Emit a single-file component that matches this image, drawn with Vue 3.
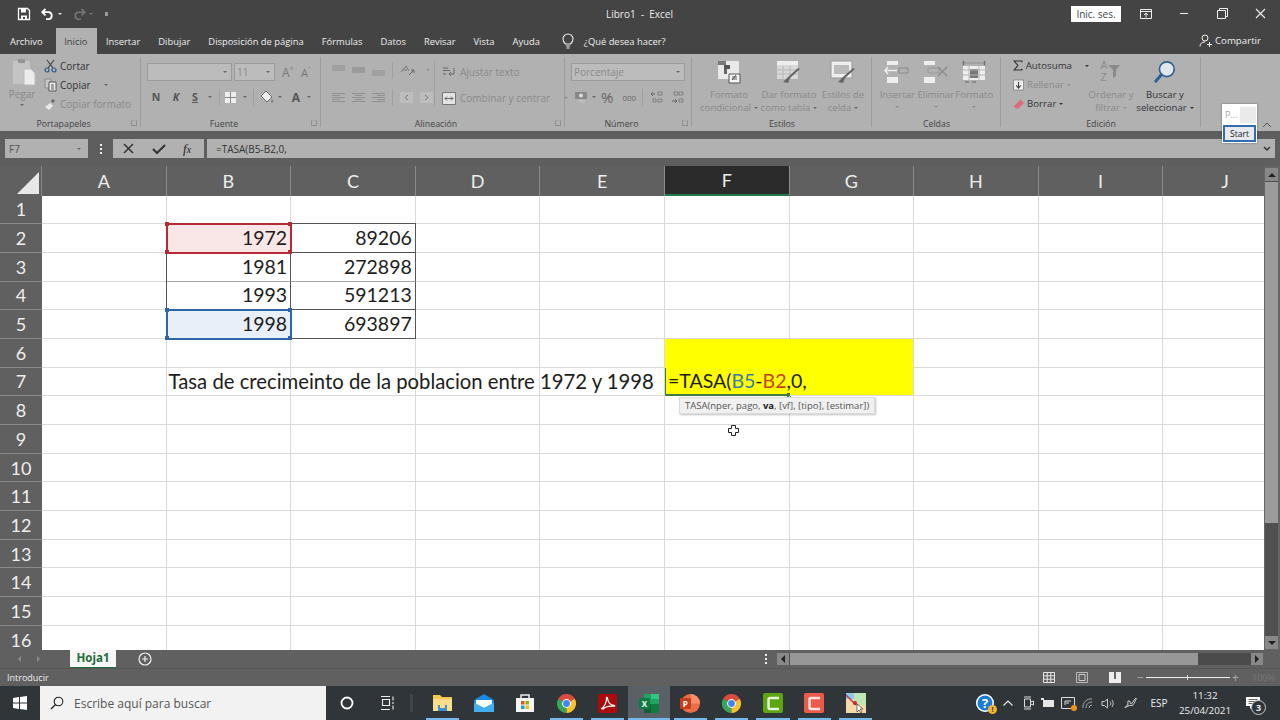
<script setup>
const columns = ['A', 'B', 'C', 'D', 'E', 'F', 'G', 'H', 'I', 'J']
const rows = Array.from({ length: 16 }, (_, i) => i + 1)

const values = {
  B2: '1972', C2: '89206',
  B3: '1981', C3: '272898',
  B4: '1993', C4: '591213',
  B5: '1998', C5: '693897',
}

const cellClass = (col, row) => {
  const id = col + row
  const list = []
  if (id === 'B2') list.push('refRed')
  if (id === 'B5') list.push('refBlue')
  if ((col === 'B' || col === 'C') && row >= 2 && row <= 5) list.push('boxed')
  if (col === 'B' && (row === 3 || row === 4)) list.push('boxLeft')
  if (id === 'C2') list.push('boxTop')
  if ((col === 'B' || col === 'C') && row === 3) list.push('softBottom')
  if (col === 'F' && row === 6) list.push('yellow', 'noRight', 'noBottom')
  if (col === 'G' && row === 6) list.push('yellow', 'noBottom')
  if (col === 'F' && row === 7) list.push('yellow', 'noRight', 'active')
  if (col === 'G' && row === 7) list.push('yellow')
  return list
}

const taskApps = ['folder', 'mail', 'store', 'chrome', 'pdf', 'excel', 'ppt', 'chrome2', 'green', 'red', 'paint']
</script>

<template>
  <div class="app">
    <div class="titleBar">
      <div class="quick">
        <svg width="14" height="14" viewBox="0 0 14 14"><path d="M1.500 1.500h9l2 2v9h-11z" fill="none" stroke="#fff" stroke-width="1.300"/><path d="M4 2h5v3.500H4zM4 8.500h6v4H4z" fill="#fff"/><path d="M6 10h2v2H6z" fill="#444"/></svg>
        <svg class="undo" width="14" height="12" viewBox="0 0 14 12"><path d="M4.500 1L1.200 4.200l3.300 3.200M1.500 4.200h6.500a3.600 3.600 0 0 1 0 7H5" fill="none" stroke="#fff" stroke-width="1.800"/></svg>
        <span class="tinyCaret"></span>
        <svg class="redo" width="14" height="12" viewBox="0 0 14 12"><path d="M9.500 1l3.300 3.200-3.300 3.200M12.500 4.200H6a3.600 3.600 0 0 0 0 7h3" fill="none" stroke="#777" stroke-width="1.600"/></svg>
        <span class="tinyCaret dim"></span>
        <span class="customize"></span>
      </div>
      <div class="docTitle">Libro1&nbsp; -&nbsp; Excel</div>
      <div class="winControls">
        <span class="signIn">Inic. ses.</span>
        <svg class="ctl" width="12" height="10" viewBox="0 0 12 10"><path d="M.5.500h11v9H.5zM.5 2.500h11" fill="none" stroke="#eee"/><path d="M6 8.500V4M4 6l2-2 2 2" fill="none" stroke="#eee"/></svg>
        <svg class="ctl" width="11" height="11" viewBox="0 0 11 11"><path d="M1 5.500h8" stroke="#eee"/></svg>
        <svg class="ctl" width="11" height="11" viewBox="0 0 11 11"><path d="M.5 2.500h8v8h-8zM2.500 2.500v-2h8v8h-2" fill="none" stroke="#eee"/></svg>
        <svg class="ctl" width="11" height="11" viewBox="0 0 11 11"><path d="M1 1l9 9M10 1l-9 9" stroke="#eee" stroke-width="1.100"/></svg>
      </div>
    </div>

    <div class="tabBar">
      <span class="tab">Archivo</span>
      <span class="tab current">Inicio</span>
      <span class="tab">Insertar</span>
      <span class="tab">Dibujar</span>
      <span class="tab">Disposición de página</span>
      <span class="tab">Fórmulas</span>
      <span class="tab">Datos</span>
      <span class="tab">Revisar</span>
      <span class="tab">Vista</span>
      <span class="tab">Ayuda</span>
      <svg class="bulb" width="12" height="16" viewBox="0 0 12 16"><path d="M3.500 11C2 9.500 1 8.300 1 6a5 5 0 0 1 10 0c0 2.300-1 3.500-2.500 5zM4 13h4M4.500 15h3" fill="none" stroke="#eee" stroke-width="1.100"/></svg>
      <span class="tab ask">¿Qué desea hacer?</span>
      <span class="share">
        <svg width="13" height="13" viewBox="0 0 13 13"><circle cx="6" cy="4" r="3" fill="none" stroke="#eee"/><path d="M1 12.500c0-3 2-4.500 5-4.500M8 10.500h5M10.500 8v5" fill="none" stroke="#eee"/></svg>
        Compartir
      </span>
    </div>

    <div class="ribbon">
      <div class="group clip">
        <div class="groupBody">
          <div class="pasteBtn">
            <svg width="24" height="28" viewBox="0 0 24 28"><path d="M1 3h17v23H1z" fill="#c4c4c4"/><path d="M6 1h7v4H6z" fill="#959595"/><path d="M12 11h7l4 4v12H12z" fill="#ececec" stroke="#bbb"/></svg>
            <span class="dimText">Pegar</span>
            <span class="tinyCaret darkish"></span>
          </div>
          <div class="clipList">
            <div class="clipItem">
              <svg width="13" height="14" viewBox="0 0 13 14"><path d="M3 1l6 8M10 1L4 9" stroke="#444" stroke-width="1.200"/><circle cx="3" cy="11" r="2" fill="none" stroke="#2f5d8e" stroke-width="1.200"/><circle cx="10" cy="11" r="2" fill="none" stroke="#2f5d8e" stroke-width="1.200"/></svg>
              <span class="darkText">Cortar</span>
            </div>
            <div class="clipItem">
              <svg width="13" height="14" viewBox="0 0 13 14"><path d="M1 1h6v9H1z" fill="#c9c9c9" stroke="#8a8a8a"/><path d="M5 4h7v9H5z" fill="#eee" stroke="#555"/><path d="M7 7h3M7 9h3M7 11h3" stroke="#555"/></svg>
              <span class="darkText">Copiar</span>
              <span class="tinyCaret darkish caretGap"></span>
            </div>
            <div class="clipItem">
              <svg width="13" height="14" viewBox="0 0 13 14"><path d="M1 10l5-4 3 3-4 4z" fill="#e8e8e8"/><path d="M7 4l2-2 2 2-2 2z" fill="#666"/></svg>
              <span class="dimText">Copiar formato</span>
            </div>
          </div>
        </div>
        <div class="groupLabel launch">Portapapeles<span class="launcher"></span></div>
      </div>

      <div class="group font">
        <div class="groupBody column">
          <div class="toolRow">
            <span class="combo fontName"><span class="tinyCaret darkish"></span></span>
            <span class="combo fontSize"><span class="dimText">11</span><span class="tinyCaret darkish"></span></span>
            <span class="sizeBtn">A<sup>^</sup></span>
            <span class="sizeBtn small">A<sup>ˇ</sup></span>
          </div>
          <div class="toolRow second tight">
            <b class="styleBtn">N</b>
            <b class="styleBtn italic m6">K</b>
            <b class="styleBtn under m5">S</b>
            <span class="tinyCaret darkish m6"></span>
            <span class="vline m7"></span>
            <svg class="m4" width="13" height="13" viewBox="0 0 13 13"><path d="M1 1h11v11H1z" fill="#eee"/><path d="M1 6.500h11M6.500 1v11" stroke="#888"/></svg>
            <span class="tinyCaret darkish m6"></span>
            <span class="vline m6"></span>
            <svg class="m6" width="14" height="14" viewBox="0 0 14 14"><path d="M6 1l6 6-5 5-6-6z" fill="#eee" stroke="#666"/><path d="M12 9c1 1.500 1.500 2 1 3s-2 .5-2 0 .5-1.500 1-3z" fill="#777"/></svg>
            <span class="tinyCaret darkish m4"></span>
            <b class="styleBtn colorA m7">A</b>
            <span class="tinyCaret darkish m4"></span>
          </div>
        </div>
        <div class="groupLabel launch">Fuente<span class="launcher"></span></div>
      </div>

      <div class="group align">
        <div class="groupBody">
          <div class="alignCol">
            <div class="toolRow">
              <svg width="13" height="11" viewBox="0 0 13 11"><path d="M0 1h13M0 3h13M0 5h13" stroke="#8f8f8f"/></svg>
              <svg width="13" height="11" viewBox="0 0 13 11"><path d="M0 3h13M0 5h13M0 7h13" stroke="#858585"/></svg>
              <svg width="13" height="11" viewBox="0 0 13 11"><path d="M0 6h13M0 8h13M0 10h13" stroke="#8f8f8f"/></svg>
              <span class="vline"></span>
              <svg width="16" height="14" viewBox="0 0 16 14"><path d="M1 9l5-6 3 5M3 7h4" fill="none" stroke="#777"/><path d="M9 12l5-5M14 7h-3M14 7v3" fill="none" stroke="#666"/></svg>
              <span class="tinyCaret dimCaret"></span>
            </div>
            <div class="toolRow second">
              <svg width="13" height="11" viewBox="0 0 13 11"><path d="M0 1.500h13M0 3.500h8M0 5.500h13M0 7.500h8M0 9.500h13" stroke="#909090"/></svg>
              <svg width="13" height="11" viewBox="0 0 13 11"><path d="M0 1.500h13M3 3.500h7M0 5.500h13M3 7.500h7M0 9.500h13" stroke="#909090"/></svg>
              <svg width="13" height="11" viewBox="0 0 13 11"><path d="M0 1.500h13M5 3.500h8M0 5.500h13M5 7.500h8M0 9.500h13" stroke="#909090"/></svg>
              <span class="vline"></span>
              <svg width="13" height="11" viewBox="0 0 13 11"><path d="M0 0h13v11H0z" fill="#bdbdbd"/><path d="M8 3L5 5.500 8 8" fill="none" stroke="#777"/></svg>
              <svg width="13" height="11" viewBox="0 0 13 11"><path d="M0 0h13v11H0z" fill="#bdbdbd"/><path d="M5 3l3 2.500L5 8" fill="none" stroke="#777"/></svg>
            </div>
          </div>
          <div class="alignCol wrapCol">
            <div class="clipItem">
              <svg width="14" height="14" viewBox="0 0 14 14"><path d="M1 3h5M1 5.500h7M1 9h3M12 3v6H7M9 7l-2 2 2 2" fill="none" stroke="#666"/></svg>
              <span class="dimText">Ajustar texto</span>
            </div>
            <div class="clipItem">
              <svg width="14" height="13" viewBox="0 0 14 13"><path d="M.5.500h13v12H.5z" fill="#e4e4e4" stroke="#777"/><path d="M3 6.500h8M3 6.500l2-2M3 6.500l2 2M11 6.500l-2-2M11 6.500l-2 2" stroke="#666" fill="none"/></svg>
              <span class="dimText">Combinar y centrar</span>
              <span class="tinyCaret dimCaret caretGap"></span>
            </div>
          </div>
        </div>
        <div class="groupLabel launch">Alineación<span class="launcher"></span></div>
      </div>

      <div class="group number">
        <div class="groupBody column">
          <div class="toolRow">
            <span class="combo numFormat"><span class="dimText">Porcentaje</span><span class="tinyCaret darkish"></span></span>
          </div>
          <div class="toolRow second tight">
            <svg width="14" height="14" viewBox="0 0 14 14"><path d="M1 2h12v7H1z" fill="#888"/><circle cx="7" cy="5.500" r="2" fill="#ddd"/><path d="M5 10h6v3H5z" fill="#bcbcbc"/></svg>
            <span class="tinyCaret darkish m4"></span>
            <span class="percent m5">%</span>
            <span class="thousand m9">000</span>
            <span class="vline m6"></span>
            <svg class="m7" width="14" height="14" viewBox="0 0 14 14"><path d="M1 4h4M1 4l2-2M1 4l2 2" stroke="#666" fill="none"/><path d="M8 2h4v3H8zM3 9h3v3H3zM8 9h4v3H8z" fill="none" stroke="#777" stroke-width=".8"/></svg>
            <svg class="m7" width="14" height="14" viewBox="0 0 14 14"><path d="M3 2h4v3H3zM8 2h4v3H8zM8 9h4v3H8z" fill="none" stroke="#777" stroke-width=".8"/><path d="M1 11h5M6 11l-2-2M6 11l-2 2" stroke="#666" fill="none"/></svg>
          </div>
        </div>
        <div class="groupLabel launch">Número<span class="launcher"></span></div>
      </div>

      <div class="group styles">
        <div class="groupBody bigRow">
          <div class="bigBtn wideA">
            <svg width="24" height="24" viewBox="0 0 24 24"><path d="M1 1h21v18H1z" fill="#e9e9e9"/><path d="M1 1h8v4H1z" fill="#777"/><path d="M7 5h6v4H7z" fill="#555"/><path d="M7 9h3v5H7z" fill="#666"/><path d="M12 14h11v9H12z" fill="#f4f4f4" stroke="#555"/><path d="M15 20l4-5M15 17h5M15 19h5" stroke="#333" stroke-width=".8"/></svg>
            <span class="dimText">Formato</span>
            <span class="dimText">condicional<i class="tinyCaret darkish"></i></span>
          </div>
          <div class="bigBtn wideB">
            <svg width="26" height="24" viewBox="0 0 26 24"><path d="M1 1h21v18H1z" fill="#d8d8d8"/><path d="M1 1h21v4H1z" fill="#eee"/><path d="M7 6v13M14 6v13M1 10h21M1 14h21" stroke="#b8b8b8"/><path d="M24 9L14 18l-2 5-5-1 5-5 10-9z" fill="#666"/></svg>
            <span class="dimText">Dar formato</span>
            <span class="dimText">como tabla<i class="tinyCaret darkish"></i></span>
          </div>
          <div class="bigBtn wideC">
            <svg width="26" height="24" viewBox="0 0 26 24"><path d="M1 1h21v17H1z" fill="#eee" stroke="#999"/><path d="M4 5h15v9H4z" fill="#bbb"/><path d="M25 9L15 18l-2 5-5-1 5-5 10-9z" fill="#666"/></svg>
            <span class="dimText">Estilos de</span>
            <span class="dimText">celda<i class="tinyCaret darkish"></i></span>
          </div>
        </div>
        <div class="groupLabel">Estilos</div>
      </div>

      <div class="group cells">
        <div class="groupBody bigRow">
          <div class="bigBtn cellBtn">
            <svg width="26" height="24" viewBox="0 0 26 24"><path d="M3 1h11v4H3zM3 17h11v6H3z" fill="#eee"/><path d="M15 8h9v5h-9z" fill="none" stroke="#888"/><path d="M13 10.500H1M4 7l-3 3.500L4 14" fill="none" stroke="#eee" stroke-width="1.500"/></svg>
            <span class="dimText">Insertar</span>
            <i class="tinyCaret dimCaret"></i>
          </div>
          <div class="bigBtn cellBtn">
            <svg width="26" height="24" viewBox="0 0 26 24"><path d="M1 1h11v4H1zM1 17h11v6H1z" fill="#eee"/><path d="M5 8h11v5H5z" fill="none" stroke="#999"/><path d="M15 7l9 9M24 7l-9 9" stroke="#888" stroke-width="1.200"/></svg>
            <span class="dimText">Eliminar</span>
            <i class="tinyCaret dimCaret"></i>
          </div>
          <div class="bigBtn cellBtn">
            <svg width="24" height="24" viewBox="0 0 24 24"><path d="M1 1h1v4H1zM22 1h1v4h-1zM2 3h20" fill="#666" stroke="#777" stroke-width=".5"/><path d="M1 6h22v14H1z" fill="#eee"/><path d="M8 9h8v9H8z" fill="#777"/><path d="M1 10h22M1 15h22M7 6v14M17 6v14" stroke="#b5b5b5"/><path d="M3 22h4M10 22h4" stroke="#666"/></svg>
            <span class="dimText">Formato</span>
            <i class="tinyCaret dimCaret"></i>
          </div>
        </div>
        <div class="groupLabel">Celdas</div>
      </div>

      <div class="group edit">
        <div class="groupBody">
          <div class="clipList editList">
            <div class="clipItem">
              <svg width="11" height="13" viewBox="0 0 12 13"><path d="M11 2.500V1H1.500L6 6.500 1.500 12H11v-1.500" fill="none" stroke="#333" stroke-width="1.400"/></svg>
              <span class="darkText">Autosuma</span>
              <span class="tinyCaret black caretGap"></span>
            </div>
            <div class="clipItem">
              <svg width="11" height="12" viewBox="0 0 12 12"><path d="M.5.500h11v11H.5z" fill="#eee" stroke="#888"/><path d="M6 2.500v7M3.500 6.500L6 9.500l2.500-3" fill="none" stroke="#444" stroke-width="1.200"/></svg>
              <span class="dimText">Rellenar<i class="tinyCaret dimCaret"></i></span>
            </div>
            <div class="clipItem">
              <svg width="11" height="12" viewBox="0 0 12 12"><path d="M8 1l4 4-6 6H3L1 8.500z" fill="#dc6c7a"/></svg>
              <span class="darkText">Borrar<i class="tinyCaret black"></i></span>
            </div>
          </div>
          <div class="bigBtn sortBtn">
            <div class="sortIcon">
              <div class="azStack"><span>A</span><span>Z</span></div>
              <svg width="13" height="15" viewBox="0 0 13 15"><path d="M0 1h12L8 6v6l-3 2V6z" fill="#8a8a8a"/></svg>
            </div>
            <span class="dimText">Ordenar y</span>
            <span class="dimText">filtrar<i class="tinyCaret dimCaret"></i></span>
          </div>
          <div class="bigBtn findBtn">
            <svg width="24" height="24" viewBox="0 0 24 26"><circle cx="14" cy="10" r="8" fill="#dfe6ec" stroke="#2b5f96" stroke-width="1.800"/><path d="M8 16L2 23" stroke="#2b5f96" stroke-width="3.200" stroke-linecap="round"/></svg>
            <span class="darkText">Buscar y</span>
            <span class="darkText">seleccionar<i class="tinyCaret black"></i></span>
          </div>
        </div>
        <div class="groupLabel">Edición</div>
      </div>

      <svg class="collapse" width="10" height="6" viewBox="0 0 10 6"><path d="M1 5l4-4 4 4" fill="none" stroke="#555"/></svg>

      <div class="startPopup">
        <div class="popupTop"><span>P...</span><i></i></div>
        <div class="popupBtn">Start</div>
      </div>
    </div>

    <div class="formulaBar">
      <div class="nameBox">F7<span class="tinyCaret darkish"></span></div>
      <div class="dots"><i></i><i></i><i></i></div>
      <div class="fxBox">
        <svg width="13" height="13" viewBox="0 0 13 13"><path d="M2 2l9 9M11 2l-9 9" stroke="#333" stroke-width="1.500"/></svg>
        <svg width="14" height="12" viewBox="0 0 14 12"><path d="M1 6l4 4 8-8" fill="none" stroke="#333" stroke-width="2"/></svg>
        <span class="fx">f<small>x</small></span>
      </div>
      <div class="formulaInput">
        <span>=TASA(B5-B2,0,</span>
        <svg width="8" height="5" viewBox="0 0 8 5"><path d="M1 1l3 3 3-3" fill="none" stroke="#333" stroke-width="1.500"/></svg>
      </div>
    </div>

    <div class="sheetArea">
      <div class="sheet">
        <div class="corner"><span></span></div>
        <div v-for="col in columns" :key="col" class="colHead" :class="{ selected: col === 'F' }">{{ col }}</div>
        <template v-for="row in rows" :key="row">
          <div class="rowHead">{{ row }}</div>
          <div v-for="col in columns" :key="col" class="cell" :class="cellClass(col, row)">
            <template v-if="values[col + row]">{{ values[col + row] }}</template>
            <span v-if="col === 'B' && row === 7" class="longText">Tasa de crecimeinto de la poblacion entre 1972 y 1998</span>
            <span v-if="col === 'F' && row === 7" class="editor">=TASA(<b class="blue">B5</b>-<b class="red">B2</b>,0,</span>
            <template v-if="(col + row) === 'B2' || (col + row) === 'B5'">
              <i class="handle tl"></i><i class="handle tr"></i><i class="handle bl"></i><i class="handle br"></i>
            </template>
          </div>
        </template>
        <div class="tooltip">TASA(nper, pago, <b>va</b>, [vf], [tipo], [estimar])</div>
        <svg class="cursor" width="11" height="11" viewBox="0 0 11 11"><path d="M3.500.500h4v3h3v4h-3v3h-4v-3h-3v-4h3z" fill="#fff" stroke="#222"/></svg>
      </div>
      <div class="vScroll">
        <div class="vTrack">
          <span class="arrowBox"><i class="triUp"></i></span>
          <div class="vThumb"></div>
          <span class="arrowBox bottom"><i class="triDown"></i></span>
        </div>
      </div>
    </div>

    <div class="sheetTabs">
      <span class="navArrow left"></span>
      <span class="navArrow right"></span>
      <span class="sheetTab">Hoja1</span>
      <svg class="addSheet" width="14" height="14" viewBox="0 0 14 14"><circle cx="7" cy="7" r="6" fill="none" stroke="#f2f2f2" stroke-width="1.200"/><path d="M7 4v6M4 7h6" stroke="#f2f2f2" stroke-width="1.200"/></svg>
      <div class="dots tabDots"><i></i><i></i><i></i></div>
      <div class="hScroll">
        <span class="hArrow"><i class="triLeft"></i></span>
        <div class="hThumb"></div>
        <span class="hArrow end"><i class="triRight"></i></span>
      </div>
    </div>

    <div class="statusBar">
      <span>Introducir</span>
      <div class="viewIcons">
        <svg width="12" height="11" viewBox="0 0 12 11"><path d="M.5.500h11v10H.5zM.5 3.800h11M.5 7.200h11M4.200.500v10M7.800.500v10" fill="none" stroke="#e6e6e6"/></svg>
        <svg width="12" height="11" viewBox="0 0 12 11"><path d="M.5.500h11v10H.5z" fill="none" stroke="#bbb"/><path d="M3 2.500h6v6H3z" fill="none" stroke="#ccc"/></svg>
        <svg width="12" height="11" viewBox="0 0 12 11"><path d="M0 0h12v11H0z" fill="#eee"/><path d="M5 0h2v7H5z" fill="#666"/></svg>
      </div>
      <div class="zoomSlider"><span class="zoomSign">−</span><div class="sliderLine"><i></i></div><span class="zoomSign">+</span><span class="zoomPct">100%</span></div>
    </div>

    <div class="taskbar">
      <div class="startBtn">
        <svg width="14" height="14" viewBox="0 0 14 14"><path d="M0 2l6-1v5.500H0zM7 .9L14 0v6.500H7zM0 7.500h6V13l-6-1zM7 7.500h7V14l-7-1z" fill="#fff"/></svg>
      </div>
      <div class="searchBox">
        <svg width="14" height="14" viewBox="0 0 14 14"><circle cx="8.500" cy="5.500" r="4.300" fill="none" stroke="#222" stroke-width="1.100"/><path d="M5.500 8.500L1 13" stroke="#222" stroke-width="1.200"/></svg>
        <span>Escribe aquí para buscar</span>
      </div>
      <div class="sysBtn"><svg width="14" height="14" viewBox="0 0 14 14"><circle cx="7" cy="7" r="5.500" fill="none" stroke="#fff" stroke-width="1.800"/></svg></div>
      <div class="sysBtn"><svg width="15" height="14" viewBox="0 0 15 14"><path d="M1 .5h9M1 13.500h9M2.500 3.500h7v6h-7zM13 .5v4M13 6v2M13 9.500v4" fill="none" stroke="#eee" stroke-width="1.100"/></svg></div>
      <span class="taskSep"></span>
      <div v-for="app in taskApps" :key="app" class="taskApp" :class="{ current: app === 'excel', noBar: app === 'store' || app === 'mail' }">
        <svg v-if="app === 'folder'" width="20" height="18" viewBox="0 0 20 18"><path d="M0 1h7l2 2h10v14H0z" fill="#f5c94e"/><path d="M0 5h19v12H0z" fill="#fbdd8b"/><path d="M5 11h9v6H5z" fill="#3f8fce"/><path d="M7 11h5v3H7z" fill="#fbdd8b"/></svg>
        <svg v-if="app === 'mail'" width="20" height="18" viewBox="0 0 20 18"><path d="M0 6l10-6 10 6v12H0z" fill="#1a8ae0"/><path d="M2 6h16v4l-8 4-8-4z" fill="#fff"/><path d="M0 9l10 5 10-5v9H0z" fill="#42b0f0"/></svg>
        <svg v-if="app === 'store'" width="20" height="20" viewBox="0 0 20 20"><path d="M1 5h18v14H1z" fill="#f5f5f5"/><path d="M6 5V2h8v3" fill="none" stroke="#eee" stroke-width="1.500"/><path d="M6 8h3.500v3.500H6z" fill="#e8502a"/><path d="M10.500 8H14v3.500h-3.500z" fill="#7fba00"/><path d="M6 12.500h3.500V16H6z" fill="#1ba1e2"/><path d="M10.500 12.500H14V16h-3.500z" fill="#fbb900"/></svg>
        <svg v-if="app === 'chrome' || app === 'chrome2'" width="19" height="19" viewBox="0 0 19 19"><path d="M9.500 9.500L1.270 4.750A9.500 9.500 0 0 1 17.730 4.750z" fill="#dd4b3e"/><path d="M9.500 9.500V19A9.500 9.500 0 0 1 1.270 4.750z" fill="#3aa757"/><path d="M9.500 9.500l8.230-4.750A9.500 9.500 0 0 1 9.500 19z" fill="#fbc02d"/><circle cx="9.500" cy="9.500" r="4.400" fill="#fff"/><circle cx="9.500" cy="9.500" r="3.400" fill="#4285f4"/></svg>
        <svg v-if="app === 'pdf'" width="19" height="19" viewBox="0 0 19 19"><rect width="19" height="19" rx="2" fill="#ad0b0b"/><path d="M3 15c3-1.500 6-7 5.500-11-.2-1 .9-1 1 0 .4 4 3 7 6.500 7.300 1 .1.800 1 0 .9-4-.4-9 .5-11.500 3.300" fill="none" stroke="#fff" stroke-width="1.200"/></svg>
        <svg v-if="app === 'excel'" width="20" height="19" viewBox="0 0 20 19"><path d="M5 0h15v19H5z" fill="#21a366"/><path d="M12 0h8v5h-8z" fill="#33c481"/><path d="M12 5h8v5h-8z" fill="#21a366"/><path d="M5 10h7v9H5z" fill="#185c37"/><path d="M12 10h8v9h-8z" fill="#107c41"/><rect y="4" width="11" height="11" rx="1" fill="#107c41"/><text x="2.800" y="12.500" class="appLetter">X</text></svg>
        <svg v-if="app === 'ppt'" width="20" height="19" viewBox="0 0 20 19"><circle cx="10.500" cy="9.500" r="9.500" fill="#ed6c47"/><path d="M10.500 0A9.500 9.500 0 0 1 20 9.500h-9.500z" fill="#ff8f6b"/><rect y="4" width="11" height="11" rx="1" fill="#c43e1c"/><text x="2.800" y="12.500" class="appLetter">P</text></svg>
        <svg v-if="app === 'green'" width="20" height="20" viewBox="0 0 20 20"><rect width="20" height="20" rx="2" fill="#5ba612"/><path d="M16 5H7C6 5 5.500 6 5.500 7v7c0 1 .5 2 1.500 2h9" fill="none" stroke="#e6f4d7" stroke-width="2.500"/></svg>
        <svg v-if="app === 'red'" width="20" height="20" viewBox="0 0 20 20"><rect width="20" height="20" rx="2" fill="#ec5a49"/><path d="M16 5H7C6 5 5.500 6 5.500 7v7c0 1 .5 2 1.500 2h9" fill="none" stroke="#fde4df" stroke-width="2.500"/></svg>
        <svg v-if="app === 'paint'" width="20" height="20" viewBox="0 0 20 20"><path d="M0 0h20v20H0z" fill="#f7d8a8"/><path d="M8 0h12v12H8z" fill="#bfe6b5"/><path d="M0 0h8v6H0z" fill="#8fc7ea"/><path d="M0 2l10 10" stroke="#c2344a" stroke-width="1.500"/><circle cx="9" cy="10" r="2" fill="#d21f2d"/><path d="M11 11l0 8 2-2 2 3 1-1-2-3 3 0z" fill="#fff" stroke="#222" stroke-width=".6"/></svg>
      </div>
      <div class="tray">
        <span class="slot s24"><span class="helpIcon">?<i>!</i></span></span>
        <span class="slot s21"><svg width="10" height="6" viewBox="0 0 10 6"><path d="M.5 5.500L5 1l4.500 4.500" fill="none" stroke="#eee" stroke-width="1.100"/></svg></span>
        <span class="slot s20"><svg width="11" height="14" viewBox="0 0 11 14"><path d="M1.500 3h6v8h-6zM7.500 6l3-1v4l-3-1zM1 1h7M1 13h7" fill="none" stroke="#ddd"/></svg></span>
        <span class="slot s20"><svg width="14" height="10" viewBox="0 0 14 10"><path d="M2 2h11v7H2z" fill="#e6e6e6"/><path d="M0 0h3v2H0z" fill="#e6e6e6"/></svg></span>
        <span class="slot s20"><span class="hub"><svg width="14" height="12" viewBox="0 0 14 12"><path d="M.5.500h13v11H.5zM4 8V4h6M5 6h3" fill="none" stroke="#ddd"/></svg><i></i></span></span>
        <span class="slot s20"><svg width="12" height="10" viewBox="0 0 12 10"><path d="M1 10a8 8 0 0 1 9-9M4 10a5.500 5.500 0 0 1 6-6M7 10a3 3 0 0 1 3-3" fill="none" stroke="#aaa"/></svg></span>
        <span class="slot s20"><svg width="14" height="11" viewBox="0 0 14 11"><path d="M1 3.500h2.500L6.500 1v9L3.500 7.500H1zM9 3.500c1 1 1 3 0 4M11 2c1.500 2 1.500 5 0 7" fill="none" stroke="#ccc"/></svg></span>
        <span class="slot s26"><svg width="14" height="14" viewBox="0 0 14 14"><path d="M1 12c0-2 3-2 3-4s-1-3 1-3 1 3 2 3 4-6 5-6-2 6-3 7-3 0-5 1-3 2-3 2z" fill="none" stroke="#ddd"/></svg></span>
        <span class="slot s30 lang">ESP</span>
        <div class="slot s62 clock"><span>11:32</span><span>25/04/2021</span></div>
        <span class="slot s34">
          <span class="notify">
            <svg width="14" height="12" viewBox="0 0 14 12"><path d="M0 0h14v9H7l-3 3V9H0z" fill="#fff"/><path d="M2.500 2.500h9M2.500 4.500h9M2.500 6.500h9" stroke="#666"/></svg>
            <i>3</i>
          </span>
        </span>
      </div>
    </div>
  </div>
</template>

<style scoped>
.app {
  width: 1280px;
  height: 720px;
  display: flex;
  flex-direction: column;
  overflow: hidden;
  font-family: "Open Sans", "Noto Sans", sans-serif;
  font-size: 10px;
  color: #333;
}

/* title */
.titleBar {
  height: 27px;
  flex: none;
  background: #444;
  display: flex;
  align-items: center;
  position: relative;
}
.quick {
  display: flex;
  align-items: center;
  padding-left: 17px;
  width: 300px;
}
.undo { margin-left: 10px; }
.redo { margin-left: 10px; }
.tinyCaret {
  display: inline-block;
  width: 0;
  height: 0;
  border: 2px solid transparent;
  border-top: 2.500px solid #e6e6e6;
  border-bottom: 0;
  margin-left: 3px;
  vertical-align: middle;
}
.tinyCaret.dim { border-top-color: #777; }
.tinyCaret.darkish { border-top-color: #666; }
.tinyCaret.dimCaret { border-top-color: #8d8d8d; }
.tinyCaret.black { border-top-color: #333; }
.caretGap { margin-left: 10px; }
.customize {
  width: 3px;
  height: 4px;
  background: #9a9a9a;
  margin-left: 12px;
}
.docTitle {
  flex: 1;
  padding-left: 289px;
  color: #eee;
  font-size: 10px;
}
.winControls {
  display: flex;
  align-items: center;
  padding-right: 14px;
}
.signIn {
  background: #fff;
  color: #444;
  width: 50px;
  height: 16px;
  line-height: 16px;
  text-align: center;
  margin-right: 19px;
}
.ctl { margin-right: 27px; }
.ctl:last-child { margin-right: 0; }

/* tabs */
.tabBar {
  height: 27px;
  flex: none;
  background: #444;
  display: flex;
  align-items: center;
}
.tab {
  color: #eee;
  padding: 0 9px;
  height: 26px;
  line-height: 27px;
  margin-top: 1px;
  white-space: nowrap;
  font-size: 9.400px;
}
.tab:first-child { padding: 0 13px 0 10px; }
.tab.current {
  background: #b1b1b1;
  color: #444;
  padding: 0 9.500px 0 8.500px;
}
.bulb { margin-left: 13px; }
.ask { padding-left: 10px; }
.share {
  margin-left: auto;
  margin-right: 19px;
  color: #eee;
  display: flex;
  align-items: center;
  gap: 3px;
  font-size: 9.700px;
}

/* ribbon */
.ribbon {
  height: 77px;
  flex: none;
  background: #b1b1b1;
  display: flex;
  position: relative;
  padding-top: 3px;
  box-sizing: border-box;
}
.group {
  height: 73px;
  background: linear-gradient(#9b9b9b, #9b9b9b) right top / 1px 70px no-repeat;
  display: flex;
  flex-direction: column;
  flex: none;
  box-sizing: border-box;
}
.groupBody {
  flex: 1;
  display: flex;
  min-height: 0;
}
.groupBody.column { flex-direction: column; padding-top: 5px; }
.groupLabel {
  height: 14px;
  line-height: 16px;
  text-align: center;
  position: relative;
  color: #444;
  font-size: 8.800px;
}
.groupLabel.launch { padding-right: 14px; }
.launcher {
  position: absolute;
  right: 4px;
  top: 4px;
  width: 6px;
  height: 6px;
  border: 1px solid #8f8f8f;
  border-top-color: #a5a5a5;
  box-sizing: border-box;
}
.clip { width: 141px; }
.font { width: 180px; }
.align { width: 244px; }
.number { width: 127px; }
.styles { width: 180px; }
.cells { width: 129px; }
.edit { width: 200px; }
.dimText { color: #8a8a8a; white-space: nowrap; }
.darkText { color: #333; white-space: nowrap; }
.pasteBtn {
  width: 44px;
  flex: none;
  display: flex;
  flex-direction: column;
  align-items: center;
  padding-top: 1px;
  box-sizing: border-box;
}
.pasteBtn svg { margin-left: 4px; }
.pasteBtn .dimText { line-height: 12px; margin-top: 2px; }
.pasteBtn .tinyCaret { margin: 4px 0 0; }
.clipList {
  display: flex;
  flex-direction: column;
  margin-top: -1px;
}
.clipItem {
  height: 19px;
  display: flex;
  align-items: center;
  gap: 3px;
}
.clipItem i { margin-left: 3px; }
.toolRow {
  display: flex;
  align-items: center;
  gap: 6px;
  height: 20px;
  padding-left: 8px;
}
.toolRow.second { margin-top: 5px; gap: 5px; }
.toolRow.second.tight { gap: 0; }
.combo {
  height: 18px;
  background: #bcbcbc;
  border: 1px solid #9a9a9a;
  box-sizing: border-box;
  display: flex;
  align-items: center;
  justify-content: space-between;
  padding: 0 4px 0 2px;
}
.font .toolRow:first-child { gap: 2px; padding-left: 6px; }
.fontName { width: 85px; justify-content: flex-end; }
.fontSize { width: 41px; }
.sizeBtn {
  font-size: 12px;
  color: #777;
  margin-left: 5px;
  width: 14px;
}
.sizeBtn.small { font-size: 11px; margin-left: 3px; }
.sizeBtn sup { font-size: 7px; line-height: 0; }
.styleBtn {
  font-size: 10.500px;
  color: #555;
  width: 14px;
  text-align: center;
}
.italic { font-style: italic; }
.under { text-decoration: underline; }
.colorA { font-size: 12px; }
.vline {
  width: 1px;
  height: 17px;
  background: #a0a0a0;
}
.alignCol { flex: none; padding-top: 3px; }
.alignCol:first-child {
  width: 114px;
  background: linear-gradient(#a0a0a0, #a0a0a0) right 3px / 1px 46px no-repeat;
}
.alignCol .toolRow { padding-left: 11px; gap: 7px; }
.alignCol .toolRow.second { margin-top: 7px; }
.wrapCol {
  margin-left: 7px;
  padding-top: 2px;
}
.wrapCol .clipItem { height: 26px; gap: 4px; }
.number .toolRow { padding-left: 6px; }
.number .toolRow.second { padding-left: 9px; }
.numFormat { width: 114px; }
.percent { font-size: 15px; color: #666; line-height: 1; }
.thousand { font-size: 8px; color: #666; }
.bigRow { padding-top: 3px; }
.bigBtn {
  display: flex;
  flex-direction: column;
  align-items: center;
  font-size: 9.600px;
  line-height: 13px;
  flex: none;
}
.bigBtn svg { margin-bottom: 4px; flex: none; }
.bigBtn i { margin-left: 3px; }
.styles .bigRow { padding-left: 7px; }
.wideA { width: 60px; }
.wideB { width: 60px; }
.wideC { width: 48px; }
.cells .bigRow { padding-left: 6px; }
.cellBtn { width: 38.500px; }
.cellBtn i { margin: 5px 0 0; }
.edit .clipItem { font-size: 9.700px; }
.editList { padding-left: 12px; width: 88px; flex: none; box-sizing: border-box; }
.sortBtn { width: 44px; padding-top: 3px; }
.sortIcon {
  display: flex;
  height: 24px;
  margin-bottom: 4px;
}
.sortIcon svg { margin: 4px 0 0 1px; }
.azStack {
  display: flex;
  flex-direction: column;
  font-family: "Liberation Sans", sans-serif;
  font-size: 10.400px;
  line-height: 12px;
  color: #8a8a8a;
}
.findBtn { width: 56px; margin-left: 4px; padding-top: 3px; }
.collapse {
  position: absolute;
  right: 8px;
  top: 68px;
}
.startPopup {
  position: absolute;
  left: 1222px;
  top: 50px;
  width: 35px;
  height: 39px;
  background: #fff;
  box-sizing: border-box;
  z-index: 3;
  box-shadow: 0 0 2px rgba(0, 0, 0, .4);
  padding: 0 1px 1px;
  display: flex;
  flex-direction: column;
}
.popupTop {
  height: 21px;
  display: flex;
  justify-content: space-between;
  align-items: center;
  color: #aaa;
  font-size: 9px;
  padding-left: 2px;
}
.popupTop i {
  width: 16px;
  height: 16px;
  background: #eaeaea;
}
.popupBtn {
  flex: 1;
  border: 2px solid #2f6cb1;
  background: #e6e9ee;
  text-align: center;
  line-height: 13px;
  font-size: 8.500px;
  color: #222;
}

/* formula */
.formulaBar {
  height: 35px;
  flex: none;
  background: #5e5e5e;
  box-sizing: border-box;
  display: flex;
  align-items: center;
  padding: 0 5px;
}
.nameBox {
  width: 83px;
  height: 19px;
  background: #b1b1b1;
  display: flex;
  align-items: center;
  justify-content: space-between;
  padding: 0 7px 0 4px;
  box-sizing: border-box;
  color: #555;
}
.dots {
  width: 25px;
  display: flex;
  flex-direction: column;
  align-items: center;
  gap: 2px;
}
.dots i {
  width: 2px;
  height: 2px;
  background: #eee;
}
.fxBox {
  width: 91px;
  height: 19px;
  background: #b1b1b1;
  display: flex;
  align-items: center;
  gap: 17px;
  padding-left: 9px;
  box-sizing: border-box;
}
.fx {
  font-family: "Liberation Serif", serif;
  font-style: italic;
  font-size: 13px;
  color: #222;
}
.fx small { font-size: 10px; }
.formulaInput {
  flex: 1;
  margin-left: 3px;
  height: 19px;
  background: #b1b1b1;
  display: flex;
  justify-content: space-between;
  align-items: center;
  padding: 0 4px 0 9px;
  color: #333;
}

/* sheet */
.sheetArea {
  flex: 1;
  min-height: 0;
  display: flex;
  overflow: hidden;
}
.sheet {
  width: 1264px;
  flex: none;
  height: 484px;
  overflow: hidden;
  display: grid;
  grid-template-columns: 42px repeat(10, 124.600px);
  grid-template-rows: 29.500px repeat(16, 28.700px);
  position: relative;
  background: #fff;
  font-family: Lato, Carlito, sans-serif;
}
.corner {
  background: #606060;
  position: relative;
  border-right: 1px solid #888;
}
.corner span {
  position: absolute;
  right: 2px;
  bottom: 2px;
  width: 0;
  height: 0;
  border-style: solid;
  border-width: 0 0 22px 22px;
  border-color: transparent transparent #e8e8e8 transparent;
}
.colHead {
  background: #606060;
  color: #eee;
  font-size: 18px;
  display: flex;
  align-items: center;
  justify-content: center;
  border-right: 1px solid #8a8a8a;
  box-sizing: border-box;
}
.colHead.selected {
  background: #2b2b2b;
  border-bottom: 2px solid #1f7a4d;
  color: #eee;
}
.rowHead {
  background: #606060;
  color: #eee;
  font-size: 18px;
  display: flex;
  align-items: center;
  justify-content: center;
  border-bottom: 1px solid #8a8a8a;
  box-sizing: border-box;
}
.cell {
  border-right: 1px solid #dadada;
  border-bottom: 1px solid #dadada;
  box-sizing: border-box;
  position: relative;
  font-size: 19.500px;
  color: #1c1c1c;
  display: flex;
  align-items: center;
  justify-content: flex-end;
  padding: 0 3px 1px 0;
  min-width: 0;
}
.boxed {
  border-right: 1px solid #555;
  border-bottom: 1px solid #555;
}
.boxLeft { box-shadow: -1px 0 0 #555; }
.boxTop { box-shadow: 0 -1px 0 #555; }
.softBottom { border-bottom-color: #a8a8a8; }
.yellow { background: #ffff00; }
.noRight { border-right-color: #ffff00; }
.noBottom { border-bottom-color: #ffff00; }
.refRed {
  background: #f9e6e6;
  outline: 2px solid #b52a35;
  outline-offset: -1px;
  z-index: 2;
}
.refBlue {
  background: #e7eff9;
  outline: 2px solid #2f65a7;
  outline-offset: -1px;
  z-index: 2;
}
.handle {
  position: absolute;
  width: 4px;
  height: 4px;
  background: #b52a35;
}
.refBlue .handle { background: #2f65a7; }
.tl { left: -2px; top: -2px; }
.tr { right: -2px; top: -2px; }
.bl { left: -2px; bottom: -2px; }
.br { right: -2px; bottom: -2px; }
.longText {
  position: absolute;
  left: 2px;
  top: 1px;
  white-space: nowrap;
  z-index: 2;
  font-size: 20.300px;
}
.active {
  border-left: 1.500px solid #3e7b45;
  border-bottom: 2px solid #3e7b45;
}
.active::after {
  content: "";
  position: absolute;
  right: -2px;
  bottom: -3px;
  width: 4px;
  height: 4px;
  background: #3e7b45;
}
.editor {
  position: absolute;
  left: 2px;
  top: 1px;
  white-space: nowrap;
  z-index: 2;
}
.editor b { font-weight: 400; }
.blue { color: #3c78b5; }
.red { color: #c8401e; }
.tooltip {
  position: absolute;
  left: 679px;
  top: 231px;
  height: 17px;
  line-height: 16px;
  box-sizing: border-box;
  padding: 0 5px;
  background: #f0f0f0;
  border: 1px solid #dcdcdc;
  box-shadow: 1px 1px 2px rgba(0, 0, 0, .25);
  font-family: "Open Sans", sans-serif;
  font-size: 9.500px;
  color: #555;
  white-space: nowrap;
  z-index: 4;
}
.tooltip b { color: #222; }
.cursor {
  position: absolute;
  left: 728px;
  top: 259px;
  z-index: 4;
}

/* scrollbar */
.vScroll {
  flex: 1;
  background: #666;
  height: 484px;
  padding: 2px 0 1px 1px;
  box-sizing: border-box;
}
.vTrack {
  width: 13px;
  height: 100%;
  background: #505050;
  display: flex;
  flex-direction: column;
}
.arrowBox {
  height: 13px;
  background: #888;
  display: flex;
  align-items: center;
  justify-content: center;
  flex: none;
}
.arrowBox.bottom { margin-top: auto; }
.triUp, .triDown, .triLeft, .triRight {
  width: 0;
  height: 0;
  border: 4px solid transparent;
}
.triUp { border-bottom-color: #222; border-top: 0; }
.triDown { border-top-color: #222; border-bottom: 0; }
.triLeft { border-right-color: #222; border-left: 0; }
.triRight { border-left-color: #222; border-right: 0; }
.vThumb {
  height: 341px;
  background: #9b9b9b;
  margin-top: 1px;
}

/* sheet tabs */
.sheetTabs {
  height: 18px;
  flex: none;
  background: #606060;
  display: flex;
  align-items: center;
  position: relative;
}
.navArrow {
  width: 0;
  height: 0;
  border: 3.500px solid transparent;
}
.navArrow.left { border-right-color: #8a8a8a; border-left: 0; margin-left: 18px; }
.navArrow.right { border-left-color: #8a8a8a; border-right: 0; margin-left: 16px; }
.sheetTab {
  width: 46px;
  height: 18px;
  margin-left: 30px;
  background: #f6f6f6;
  color: #1d6b3c;
  font-weight: 700;
  font-size: 11.500px;
  line-height: 16px;
  text-align: center;
  box-sizing: border-box;
  border-bottom: 1px solid #1d6b3c;
}
.addSheet { margin-left: 22px; }
.tabDots { margin-left: auto; width: 12px; }
.hScroll {
  width: 486px;
  height: 12px;
  margin-left: 5px;
  margin-right: 17px;
  background: #4b4b4b;
  display: flex;
  align-items: center;
}
.hArrow {
  width: 12px;
  height: 12px;
  background: #888;
  display: flex;
  align-items: center;
  justify-content: center;
  flex: none;
}
.hArrow.end { margin-left: auto; }
.hThumb {
  width: 408px;
  height: 12px;
  margin-left: 1px;
  background: #979797;
}

/* status */
.statusBar {
  height: 18px;
  flex: none;
  background: #606060;
  border-top: 1px solid #565656;
  box-sizing: border-box;
  color: #eee;
  font-size: 9px;
  display: flex;
  align-items: center;
  padding-left: 7px;
}
.viewIcons {
  margin-left: auto;
  display: flex;
  gap: 21px;
  align-items: center;
}
.zoomSlider {
  display: flex;
  align-items: center;
  margin-left: 14px;
  width: 145px;
}
.zoomSign { color: #aaa; width: 11px; font-size: 12px; text-align: center; }
.sliderLine {
  width: 84px;
  height: 1px;
  background: #eee;
  position: relative;
}
.sliderLine i {
  position: absolute;
  left: 41px;
  top: -2px;
  width: 1px;
  height: 5px;
  background: #ddd;
}
.zoomPct { color: #777; margin-left: 11px; }

/* taskbar */
.taskbar {
  height: 34px;
  flex: none;
  background: #2f3539;
  display: flex;
  align-items: center;
  color: #eee;
}
.startBtn {
  width: 40px;
  display: flex;
  justify-content: center;
}
.searchBox {
  width: 286px;
  height: 34px;
  background: #f2f2f2;
  display: flex;
  align-items: center;
  gap: 10px;
  padding-left: 10px;
  box-sizing: border-box;
  color: #555;
  font-size: 12px;
}
.sysBtn {
  width: 41px;
  display: flex;
  justify-content: center;
}
.taskSep {
  width: 3px;
  height: 18px;
  background: #3f454a;
  margin-left: 2px;
  margin-right: 9px;
}
.taskApp {
  width: 41.300px;
  height: 34px;
  display: flex;
  align-items: center;
  justify-content: center;
  position: relative;
  box-sizing: border-box;
  flex: none;
}
.taskApp::after {
  content: "";
  position: absolute;
  left: 4px;
  right: 4px;
  bottom: 0;
  height: 2px;
  background: #76b9ed;
}
.taskApp.noBar::after { display: none; }
.taskApp.current { background: #596167; }
.taskApp.current::after { left: 0; right: 0; }
.tray {
  margin-left: auto;
  display: flex;
  align-items: center;
  padding-right: 10px;
}
.slot {
  display: flex;
  align-items: center;
  justify-content: center;
  flex: none;
}
.s20 { width: 20px; }
.s21 { width: 21px; }
.s24 { width: 24px; }
.s26 { width: 26px; }
.s30 { width: 30px; }
.s34 { width: 34px; }
.s62 { width: 62px; }
.helpIcon {
  width: 18px;
  height: 18px;
  border-radius: 50%;
  background: #1d7bd4;
  box-shadow: 0 0 0 1.500px #fff inset;
  color: #fff;
  font: 700 13px/18px "Open Sans", sans-serif;
  text-align: center;
  position: relative;
}
.helpIcon i {
  position: absolute;
  right: -3px;
  bottom: -2px;
  width: 9px;
  height: 9px;
  border-radius: 50%;
  background: #f5b52e;
  color: #333;
  font: 700 7px/9px "Open Sans", sans-serif;
}
.hub { position: relative; display: flex; }
.hub i {
  position: absolute;
  right: -2px;
  bottom: -2px;
  width: 6px;
  height: 6px;
  border-radius: 50%;
  background: #f39019;
}
.lang { font-size: 10px; }
.clock {
  flex-direction: column;
  font-size: 9.800px;
  line-height: 15px;
}
.notify {
  position: relative;
  display: flex;
}
.notify i {
  position: absolute;
  right: -6px;
  bottom: -6px;
  width: 13px;
  height: 13px;
  border-radius: 50%;
  border: 1px solid #ccc;
  background: #2f3539;
  font: 700 9px/13px "Open Sans", sans-serif;
  text-align: center;
}

/* small spacing helpers for the tight icon rows */
.m4 { margin-left: 4px; }
.m5 { margin-left: 5px; }
.m6 { margin-left: 6px; }
.m7 { margin-left: 7px; }
.m9 { margin-left: 9px; }
</style>

<style>
body {
  background: #444;
}
.appLetter {
  font: 700 8px "Open Sans", sans-serif;
  fill: #fff;
}
</style>
